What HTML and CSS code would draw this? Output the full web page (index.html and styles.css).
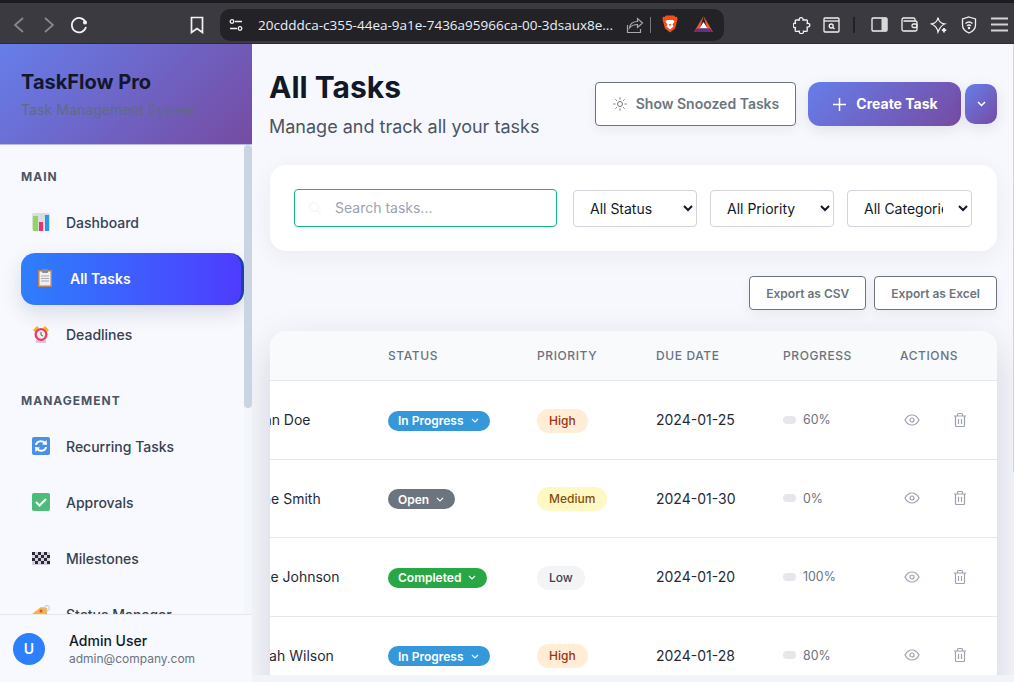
FILE: index.html
```html
<!DOCTYPE html>
<html lang="en">
<head>
  <meta charset="UTF-8">
  <meta name="viewport" content="width=device-width, initial-scale=1.0">
  <title>All Tasks</title>
  <link rel="stylesheet" href="styles.css">
</head>
<body>
  <div class="browser-bar">
    <div class="tool-btn">
      <svg width="14" height="20" viewBox="0 0 14 20" class="line dim"><path d="M11 3 3 10l8 7"/></svg>
    </div>
    <div class="tool-btn">
      <svg width="14" height="20" viewBox="0 0 14 20" class="line dim"><path d="m3 3 8 7-8 7"/></svg>
    </div>
    <div class="tool-btn">
      <svg width="20" height="20" viewBox="0 0 20 20" class="line"><path d="M16.500 7A7.200 7.200 0 1 0 17 12"/><circle cx="16" cy="7.500" r="1.200" fill="#f2f2f2"/></svg>
    </div>
    <div class="tool-btn bookmark">
      <svg width="14" height="18" viewBox="0 0 14 18" class="line"><path d="M1.500 1.500h11v15L7 12.500l-5.500 4z"/></svg>
    </div>
    <div class="url-bar">
      <svg width="14" height="14" viewBox="0 0 14 14" class="line thin"><circle cx="3" cy="3.500" r="1.800"/><path d="M6 3.500h7M1 10.500h7"/><circle cx="11" cy="10.500" r="1.800"/></svg>
      <span class="url-text">20cdddca-c355-44ea-9a1e-7436a95966ca-00-3dsaux8e...</span>
      <svg class="share" width="18" height="18" viewBox="0 0 18 18"><path fill="none" stroke="#a9a9ad" stroke-width="1.200" d="M1.500 9v7.500h13V13M3.500 12c.5-4 3.500-6.500 8-6.500V2.500L16.500 7l-5 4.500V8.500c-3 0-6 1-8 3.500z"/></svg>
      <span class="url-sep"></span>
      <svg class="brave" width="16" height="18" viewBox="0 0 16 18"><path fill="#f4501e" d="M4 .5h8l1.500 1.500 1.700-.3.300 3-.7 2.300-1.700 6.500L8 17.500 3 13.500 1.200 7 .5 4.700l.3-3L2.500 2z"/><path fill="#fff" d="M5 5h6l1.500 1.500-2 3 1 2L8 14.500 4.500 11.500l1-2-2-3z"/><path fill="#f4501e" d="M6.800 9h2.400L8 11.500z"/></svg>
      <svg class="bat" width="19" height="16" viewBox="0 0 19 16"><path fill="#f05a28" d="M9.500 0 0 16h5z"/><path fill="#f05a28" d="M9.500 0 19 16h-5z"/><path fill="#fff" d="m9.500 6 4 6.500h-8z"/><path fill="#662d91" d="M0 16l3-3.500h13l3 3.500z"/></svg>
    </div>
    <div class="tool-group">
      <div class="tool-btn">
        <svg width="18" height="18" viewBox="0 0 18 18" class="line thin"><path d="M6.300 4C5.500 1 10.500.5 10 4l3.500-.2c.5 0 .9.400.9.900l-.2 2.800c3-1.200 4 4-.1 3.700l.2 3.300c0 .6-.4.900-.9.900l-3-.2c.8 3.400-4.800 3.400-4 0l-3.300.2c-.6 0-.9-.4-.9-.9l.2-2.800C-.5 12.500-.5 6 2.400 7.300L2.200 4.800c0-.6.4-1 .9-1z"/></svg>
      </div>
      <div class="tool-btn narrow">
        <svg width="17" height="16" viewBox="0 0 17 16" class="line thin"><rect x="1" y="1" width="15" height="14" rx="1"/><path d="M1 4h15"/><circle cx="8.200" cy="9" r="2"/><path d="m9.800 10.500 1.700 1.500"/></svg>
      </div>
      <span class="tool-sep"></span>
      <div class="tool-btn">
        <svg width="17" height="15" viewBox="0 0 17 15" class="line thin"><rect x="1" y="1" width="15" height="13" rx="1"/><rect x="10.500" y="1" width="5.500" height="13" fill="#d8d8da" stroke="none"/></svg>
      </div>
      <div class="tool-btn">
        <svg width="17" height="15" viewBox="0 0 17 15" class="line thin"><path d="M14 4V2.500C14 1.500 13.500 1 12.500 1H2.500C1.500 1 1 1.800 1 3v9.500c0 1 .5 1.500 1.500 1.500h12c1 0 1.500-.5 1.500-1.500V5.500C16 4.500 15.500 4 14.500 4H2.500"/><rect x="11" y="7" width="5" height="3.500" rx="1.500"/></svg>
      </div>
      <div class="tool-btn">
        <svg width="18" height="18" viewBox="0 0 18 18" class="line thin"><path d="M8 1.500c.5 3.500 3 6 6.500 6.500-2.500 1-4.500 3.200-6.500 8-.7-4-3-6.500-6.500-8C5 7.300 7.500 5 8 1.500z"/><path d="M14 12v4.500M11.800 14.200h4.500" stroke-width="1.800"/></svg>
      </div>
      <div class="tool-btn">
        <svg width="16" height="18" viewBox="0 0 16 18" class="line thin"><path d="M8 1 14.500 3v6c0 4-3 6.500-6.500 8C4.500 15.500 1.500 13 1.500 9V3z"/><path d="M4.500 7.500c2-1.700 5-1.700 7 0M6 9.800c1.200-1 2.800-1 4 0"/><circle cx="8" cy="12" r=".6"/></svg>
      </div>
      <div class="tool-btn">
        <svg width="17" height="15" viewBox="0 0 17 15" class="line bars"><path d="M0 1.500h17M0 7.500h17M0 13.500h17"/></svg>
      </div>
    </div>
  </div>

  <div class="app">
    <aside class="sidebar">
      <div class="brand">
        <h2 class="brand-name">TaskFlow Pro</h2>
        <p class="brand-sub">Task Management System</p>
      </div>

      <nav class="side-nav">
        <div class="nav-title">MAIN</div>
        <a class="nav-item">
          <svg class="nav-icon" viewBox="0 0 18 18"><rect width="18" height="18" rx="2" fill="#dcdde3"/><rect x="1" y="3" width="5" height="15" fill="#8fd85f"/><rect x="7" y="9" width="4" height="9" fill="#e8336f"/><rect x="13" y="2" width="4" height="16" fill="#2a9be3"/></svg>
          Dashboard
        </a>
        <a class="nav-item active">
          <svg class="nav-icon" viewBox="0 0 18 18"><rect x="2" y="1" width="14" height="17" fill="#b9835c"/><rect x="3.500" y="2.500" width="11" height="14" fill="#eef0f4"/><rect x="6" y="0" width="6" height="4" rx="1" fill="#8b8d95"/><path d="M5 7h8M5 9.500h8M5 12h8" stroke="#a7a9b3"/></svg>
          All Tasks
        </a>
        <a class="nav-item">
          <svg class="nav-icon" viewBox="0 0 18 18"><path d="M1 5 5 1l2 2-4 4zM17 5l-4-4-2 2 4 4z" fill="#f6b02c"/><rect x="4" y="15" width="10" height="3" fill="#dcc6e6"/><circle cx="9" cy="9.500" r="6.500" fill="#f0385f"/><circle cx="9" cy="9.500" r="4.200" fill="#f3f1ef"/><path d="M9 7v3l2 1" stroke="#5b5566" fill="none"/></svg>
          Deadlines
        </a>

        <div class="nav-title second">MANAGEMENT</div>
        <a class="nav-item">
          <svg class="nav-icon" viewBox="0 0 18 18"><rect width="18" height="18" rx="2" fill="#4a90ea"/><path d="M4 8c.5-4 6-5 9-2M14 10c-.5 4-6 5-9 2" fill="none" stroke="#fff" stroke-width="2"/><path d="m14.500 3 .5 5-5-.5zM3.500 15 3 10l5 .5z" fill="#fff"/></svg>
          Recurring Tasks
        </a>
        <a class="nav-item">
          <svg class="nav-icon" viewBox="0 0 18 18"><rect width="18" height="18" rx="2" fill="#4fbb78"/><path d="m4 9 3.500 3.500L14 6" fill="none" stroke="#fff" stroke-width="2"/></svg>
          Approvals
        </a>
        <a class="nav-item">
          <svg class="nav-icon flag" viewBox="0 0 18 13"><rect width="18" height="13" fill="#d9cfe3"/><path fill="#2a2833" d="M0 0h3v3H0zM6 0h3v3H6zM12 0h3v3h-3zM3 3h3v3H3zM9 3h3v3H9zM15 3h3v3h-3zM0 6h3v3H0zM6 6h3v3H6zM12 6h3v3h-3zM3 9h3v3H3zM9 9h3v3H9zM15 9h3v3h-3z"/></svg>
          Milestones
        </a>
        <a class="nav-item">
          <svg class="nav-icon" viewBox="0 0 18 18"><path d="M0 9 9 2l6 1v6l-8 8z" fill="#f6b43c"/><circle cx="9" cy="6" r="1.500" fill="#e5484d"/><circle cx="15" cy="3" r="2.500" fill="none" stroke="#c9bcd6"/></svg>
          Status Manager
        </a>
        <div class="nav-track"></div>
        <div class="nav-thumb"></div>
      </nav>

      <div class="user-box">
        <div class="avatar">U</div>
        <div class="user-text">
          <div class="user-name">Admin User</div>
          <div class="user-mail">admin@company.com</div>
        </div>
      </div>
    </aside>

    <main class="main">
      <header class="page-head">
        <div>
          <h1 class="page-title">All Tasks</h1>
          <p class="page-sub">Manage and track all your tasks</p>
        </div>
        <div class="head-actions">
          <button class="btn-outline">
            <svg width="14" height="14" viewBox="0 0 14 14" fill="none" stroke="#6c757d"><circle cx="7" cy="7" r="2.500"/><path d="M7 .5v2M7 11.500v2M.5 7h2M11.500 7h2M2.400 2.400l1.400 1.400M10.200 10.200l1.400 1.400M2.400 11.600l1.400-1.400M10.200 3.800l1.400-1.400"/></svg>
            <span class="btn-label">Show Snoozed Tasks</span>
          </button>
          <button class="btn-create">
            <svg width="13" height="13" viewBox="0 0 13 13" stroke="#fff" stroke-width="1.500"><path d="M6.500 0v13M0 6.500h13"/></svg>
            <span class="btn-label">Create Task</span>
          </button>
          <button class="btn-caret">
            <svg width="9" height="6" viewBox="0 0 9 6" fill="none" stroke="#fff" stroke-width="1.500"><path d="m1 1 3.500 3.500L8 1"/></svg>
          </button>
        </div>
      </header>

      <section class="filter-card">
        <div class="search-wrap">
          <svg class="search-icon" width="14" height="14" viewBox="0 0 14 14" fill="none" stroke="#f6f6f8" stroke-width="1.500"><circle cx="6" cy="6" r="4.500"/><path d="m9.500 9.500 3.500 3.500"/></svg>
          <input class="search-input" type="text" placeholder="Search tasks...">
        </div>
        <select class="filter-select"><option>All Status</option></select>
        <select class="filter-select"><option>All Priority</option></select>
        <select class="filter-select"><option>All Categories</option></select>
      </section>

      <div class="export-row">
        <button class="btn-export">Export as CSV</button>
        <button class="btn-export">Export as Excel</button>
      </div>

      <section class="table-card">
        <table class="task-table">
          <colgroup>
            <col class="col-who"><col class="col-status"><col class="col-priority"><col class="col-due"><col class="col-progress"><col class="col-actions">
          </colgroup>
          <thead>
            <tr><th></th><th>Status</th><th>Priority</th><th>Due Date</th><th>Progress</th><th>Actions</th></tr>
          </thead>
          <tbody>
            <tr>
              <td class="who">John Doe</td>
              <td class="pill-cell"><span class="status blue">In Progress <svg class="chev" viewBox="0 0 8 5"><path d="m1 1 3 3 3-3"/></svg></span></td>
              <td class="pill-cell"><span class="prio high">High</span></td>
              <td>2024-01-25</td>
              <td><div class="progress"><span class="bar"></span>60%</div></td>
              <td><div class="row-actions">
                <svg class="act" viewBox="0 0 16 16"><path d="M1 8s2.500-5 7-5 7 5 7 5-2.500 5-7 5-7-5-7-5z"/><circle cx="8" cy="8" r="2"/></svg>
                <svg class="act" viewBox="0 0 16 16"><path d="M2 4h12M5.500 4V2.500c0-.6.4-1 1-1h3c.6 0 1 .4 1 1V4M3.500 4v9.500c0 .6.400 1 1 1h7c.6 0 1-.4 1-1V4M6.500 7v5M9.500 7v5"/></svg>
              </div></td>
            </tr>
            <tr>
              <td class="who">Jane Smith</td>
              <td class="pill-cell"><span class="status gray">Open <svg class="chev" viewBox="0 0 8 5"><path d="m1 1 3 3 3-3"/></svg></span></td>
              <td class="pill-cell"><span class="prio medium">Medium</span></td>
              <td>2024-01-30</td>
              <td><div class="progress"><span class="bar"></span>0%</div></td>
              <td><div class="row-actions">
                <svg class="act" viewBox="0 0 16 16"><path d="M1 8s2.500-5 7-5 7 5 7 5-2.500 5-7 5-7-5-7-5z"/><circle cx="8" cy="8" r="2"/></svg>
                <svg class="act" viewBox="0 0 16 16"><path d="M2 4h12M5.500 4V2.500c0-.6.4-1 1-1h3c.6 0 1 .4 1 1V4M3.500 4v9.500c0 .6.400 1 1 1h7c.6 0 1-.4 1-1V4M6.500 7v5M9.500 7v5"/></svg>
              </div></td>
            </tr>
            <tr>
              <td class="who">Mike Johnson</td>
              <td class="pill-cell"><span class="status green">Completed <svg class="chev" viewBox="0 0 8 5"><path d="m1 1 3 3 3-3"/></svg></span></td>
              <td class="pill-cell"><span class="prio low">Low</span></td>
              <td>2024-01-20</td>
              <td><div class="progress"><span class="bar"></span>100%</div></td>
              <td><div class="row-actions">
                <svg class="act" viewBox="0 0 16 16"><path d="M1 8s2.500-5 7-5 7 5 7 5-2.500 5-7 5-7-5-7-5z"/><circle cx="8" cy="8" r="2"/></svg>
                <svg class="act" viewBox="0 0 16 16"><path d="M2 4h12M5.500 4V2.500c0-.6.4-1 1-1h3c.6 0 1 .4 1 1V4M3.500 4v9.500c0 .6.400 1 1 1h7c.6 0 1-.4 1-1V4M6.500 7v5M9.500 7v5"/></svg>
              </div></td>
            </tr>
            <tr>
              <td class="who">Sarah Wilson</td>
              <td class="pill-cell"><span class="status blue">In Progress <svg class="chev" viewBox="0 0 8 5"><path d="m1 1 3 3 3-3"/></svg></span></td>
              <td class="pill-cell"><span class="prio high">High</span></td>
              <td>2024-01-28</td>
              <td><div class="progress"><span class="bar"></span>80%</div></td>
              <td><div class="row-actions">
                <svg class="act" viewBox="0 0 16 16"><path d="M1 8s2.500-5 7-5 7 5 7 5-2.500 5-7 5-7-5-7-5z"/><circle cx="8" cy="8" r="2"/></svg>
                <svg class="act" viewBox="0 0 16 16"><path d="M2 4h12M5.500 4V2.500c0-.6.4-1 1-1h3c.6 0 1 .4 1 1V4M3.500 4v9.500c0 .6.400 1 1 1h7c.6 0 1-.4 1-1V4M6.500 7v5M9.500 7v5"/></svg>
              </div></td>
            </tr>
          </tbody>
        </table>
      </section>

      <div class="main-hbar"></div>
      <div class="main-vbar"></div>
    </main>
  </div>
</body>
</html>
```

FILE: styles.css
```css
* {
  box-sizing: border-box;
}

html, body {
  height: 100%;
}

body {
  margin: 0;
  overflow: hidden;
  font-family: Inter, "Liberation Sans", sans-serif;
  color: #111827;
  background: #f8f9fe;
}

button {
  font-family: inherit;
  cursor: pointer;
}

/* browser toolbar */
.browser-bar {
  display: flex;
  align-items: center;
  height: 44px;
  padding: 3px 0 0 4px;
  background: #3b3a40;
  border-top: 3px solid #1c1b20;
  border-bottom: 1px solid #2c2b30;
}

.line {
  fill: none;
  stroke: #f2f2f2;
  stroke-width: 1.7;
}

.line.dim {
  stroke: #8a8a8e;
}

.line.thin {
  stroke-width: 1.300;
}

.line.bars {
  stroke: #d4d4d6;
  stroke-width: 2;
}

.tool-btn {
  display: flex;
  justify-content: center;
  align-items: center;
  width: 30px;
  flex-shrink: 0;
}

.tool-btn.narrow {
  width: 28px;
}

.bookmark {
  margin-left: 88px;
}

.url-bar {
  display: flex;
  align-items: center;
  width: 504px;
  height: 32px;
  margin-left: 8px;
  padding-left: 9px;
  border-radius: 10px;
  background: #232227;
}

.url-text {
  margin-left: 15px;
  width: 368px;
  font-family: "Open Sans", sans-serif;
  font-size: 13.500px;
  color: #e8f0fa;
  white-space: nowrap;
}

.share {
  flex-shrink: 0;
}

.url-sep {
  width: 1px;
  height: 16px;
  margin-left: 6px;
  background: #77767b;
}

.brave {
  margin-left: 11px;
  margin-bottom: 1px;
}

.bat {
  margin-left: 16px;
  margin-bottom: 2px;
}

.tool-group {
  display: flex;
  align-items: center;
  margin-left: 63px;
}

.tool-sep {
  width: 2px;
  height: 16px;
  margin: 0 9px 0 8px;
  background: #222126;
}

/* layout */
.app {
  display: flex;
  height: 638px;
}

.sidebar {
  display: flex;
  flex-direction: column;
  flex-shrink: 0;
  width: 252px;
  background: #f8f9fe;
}

.brand {
  height: 101px;
  padding: 26px 21px 0;
  background: linear-gradient(135deg, #667eea, #764ba2);
  border-bottom: 1px solid #b7b8e6;
}

.brand-name {
  margin: 0;
  font-size: 20px;
  line-height: 24px;
  font-weight: 700;
  color: #12172e;
}

.brand-sub {
  margin: 6px 0 0;
  font-size: 14px;
  line-height: 20px;
  letter-spacing: .07px;
  color: #5f6a88;
}

.side-nav {
  position: relative;
  flex: 1;
  min-height: 0;
  overflow: hidden;
  padding: 24px 8px 0 21px;
}

.nav-title {
  height: 16px;
  margin-bottom: 12px;
  font-size: 12px;
  line-height: 16px;
  font-weight: 700;
  letter-spacing: 1px;
  color: #4b5563;
}

.nav-title.second {
  margin-top: 32px;
}

.nav-item {
  display: flex;
  align-items: center;
  gap: 16px;
  height: 52px;
  margin-bottom: 4px;
  padding-left: 11px;
  padding-bottom: 2px;
  font-size: 14px;
  font-weight: 450;
  color: #374151;
  border-radius: 14px;
}

.nav-item.active {
  padding-left: 15px;
  background: linear-gradient(90deg, #2d7ffc, #4f3cff);
  border-right: 3px solid #1e40af;
  color: #fff;
  font-weight: 600;
  box-shadow: 0 8px 20px rgba(30, 40, 90, .14);
}

.nav-icon {
  width: 18px;
  height: 18px;
  flex-shrink: 0;
  filter: blur(.3px);
}

.nav-icon.flag {
  height: 13px;
}

.nav-track {
  position: absolute;
  top: 0;
  right: 0;
  bottom: 0;
  width: 8px;
  background: #f3f6fa;
}

.nav-thumb {
  position: absolute;
  top: 0;
  right: 0;
  width: 8px;
  height: 263px;
  border-radius: 4px;
  background: #cbd5e1;
}

.user-box {
  display: flex;
  align-items: center;
  gap: 24px;
  height: 68px;
  padding-left: 13px;
  border-top: 1px solid #e5e7eb;
  background: #f8f9fe;
}

.avatar {
  display: flex;
  justify-content: center;
  align-items: center;
  width: 32px;
  height: 32px;
  border-radius: 50%;
  background: #2d7ffc;
  color: #fff;
  font-size: 14px;
  font-weight: 600;
}

.user-text {
  padding-top: 2px;
}

.user-name {
  font-size: 14px;
  line-height: 18px;
  font-weight: 500;
}

.user-mail {
  font-size: 12px;
  line-height: 18px;
  color: #6b7280;
}

/* main area */
.main {
  position: relative;
  flex: 1;
  min-width: 0;
  overflow: hidden;
  padding: 0 17px 0 18px;
  background: #f7f8fd;
}

.page-head {
  display: flex;
  justify-content: space-between;
  align-items: flex-start;
  height: 121px;
  margin-left: -1px;
  padding-top: 22px;
}

.page-title {
  margin: 0;
  font-size: 30px;
  line-height: 42px;
  font-weight: 700;
  color: #111827;
}

.page-sub {
  margin: 5px 0 0;
  font-size: 18px;
  line-height: 28px;
  color: #4b5563;
}

.head-actions {
  display: flex;
  align-items: center;
  margin-top: 16px;
}

.btn-label {
  padding-bottom: 1px;
}

.btn-outline {
  display: flex;
  justify-content: center;
  align-items: center;
  gap: 9px;
  width: 201px;
  height: 44px;
  margin-right: 12px;
  padding-left: 7px;
  font-size: 14px;
  font-weight: 600;
  color: #6c757d;
  background: #fff;
  border: 1px solid #6c757d;
  border-radius: 4px;
  box-shadow: 0 4px 12px rgba(30, 30, 70, .06);
}

.btn-create {
  display: flex;
  justify-content: center;
  align-items: center;
  gap: 10px;
  width: 153px;
  height: 44px;
  margin-right: 4px;
  padding-left: 8px;
  font-size: 14px;
  font-weight: 700;
  color: #fff;
  background: linear-gradient(135deg, #667eea, #764ba2);
  border: 0;
  border-radius: 12px;
  box-shadow: 0 4px 14px rgba(30, 30, 70, .1);
}

.btn-caret {
  display: flex;
  justify-content: center;
  align-items: center;
  width: 32px;
  height: 40px;
  padding: 0;
  background: linear-gradient(135deg, #667eea, #764ba2);
  border: 0;
  border-radius: 10px;
  box-shadow: 0 4px 14px rgba(30, 30, 70, .1);
}

.filter-card {
  display: flex;
  align-items: center;
  gap: 13px;
  height: 86px;
  padding: 0 25px 0 24px;
  background: #fff;
  border-radius: 16px;
  box-shadow: 0 6px 24px rgba(30, 30, 70, .06);
}

.search-wrap {
  position: relative;
  margin-right: 3px;
}

.search-icon {
  position: absolute;
  top: 12px;
  left: 14px;
}

.search-input {
  display: block;
  width: 263px;
  height: 38px;
  padding: 0 0 2px 40px;
  font-family: inherit;
  font-size: 14px;
  background: #fff;
  border: 1px solid #10b981;
  border-radius: 4px;
}

.search-input::placeholder {
  color: #9ca3af;
}

.filter-select {
  width: 124px;
  height: 37px;
  padding: 0 12px;
  font-family: inherit;
  font-size: 14px;
  color: #111827;
  background: #fff;
  border: 1px solid #d1d5db;
  border-radius: 4px;
}

.filter-select:last-child {
  width: 125px;
}

.export-row {
  display: flex;
  justify-content: flex-end;
  gap: 8px;
  margin-top: 25px;
}

.btn-export {
  height: 34px;
  padding: 0 16px;
  font-size: 12px;
  font-weight: 600;
  color: #6c757d;
  background: #fff;
  border: 1px solid #6c757d;
  border-radius: 4px;
  box-shadow: 0 4px 12px rgba(30, 30, 70, .06);
}

.table-card {
  margin-top: 21px;
  overflow: hidden;
  background: #fff;
  border-radius: 16px 16px 0 0;
  box-shadow: 0 16px 40px rgba(30, 30, 60, .17);
}

.task-table {
  width: 767px;
  margin-left: -40px;
  table-layout: fixed;
  border-collapse: collapse;
}

.col-who { width: 142px; }
.col-status { width: 149px; }
.col-priority { width: 119px; }
.col-due { width: 127px; }
.col-progress { width: 117px; }
.col-actions { width: 113px; }

.task-table th {
  height: 49px;
  padding: 1px 16px 0;
  text-align: left;
  font-size: 12px;
  font-weight: 500;
  letter-spacing: .05em;
  text-transform: uppercase;
  color: #6b7280;
  background: #f9fafb;
  border-bottom: 1px solid #e5e7eb;
}

.task-table td {
  height: 79px;
  padding: 0 16px;
  font-size: 14px;
  color: #1f2937;
  white-space: nowrap;
  border-bottom: 1px solid #e5e7eb;
}

.task-table tr:nth-child(even) td {
  height: 78px;
}

.task-table td.who {
  padding-left: 17px;
}

.task-table td.pill-cell {
  padding-top: 2px;
}

.status {
  display: inline-flex;
  align-items: center;
  gap: 7px;
  height: 20px;
  padding: 0 11px 0 10px;
  border-radius: 10px;
  font-size: 12px;
  font-weight: 600;
  color: #fff;
}

.status.blue { background: #3498db; }
.status.gray { background: #6c757d; }
.status.green { background: #28a745; }

.chev {
  width: 8px;
  height: 5px;
  fill: none;
  stroke: #fff;
  stroke-width: 1.200;
}

.prio {
  display: inline-block;
  height: 24px;
  padding: 0 12px;
  border-radius: 12px;
  font-size: 12px;
  line-height: 24px;
  font-weight: 500;
}

.prio.high { background: #ffedd5; color: #9a3412; }
.prio.medium { background: #fef9c3; color: #854d0e; }
.prio.low { background: #f3f4f6; color: #374151; }

.progress {
  display: flex;
  align-items: center;
  gap: 7px;
  font-size: 12.400px;
  color: #6b7280;
}

.bar {
  width: 13px;
  height: 8px;
  border-radius: 4px;
  background: #e5e7eb;
}

.row-actions {
  display: flex;
  align-items: center;
  gap: 32px;
  padding-left: 4px;
}

.act {
  width: 16px;
  height: 16px;
  fill: none;
  stroke: #9ca3af;
  stroke-width: 1.200;
}

.main-hbar {
  position: absolute;
  left: 0;
  right: 0;
  bottom: 0;
  height: 7px;
  background: #f1f5f9;
}

.main-vbar {
  position: absolute;
  top: 0;
  right: 0;
  width: 1px;
  height: 428px;
  background: #cbd5e1;
}
```
